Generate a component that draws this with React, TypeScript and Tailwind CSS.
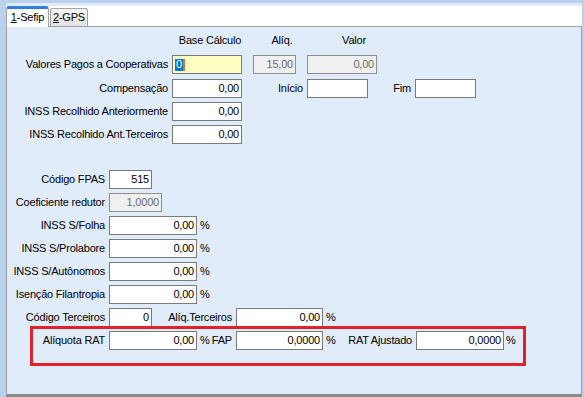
import React from "react"

type BoxProps = {
  w: string
  value?: React.ReactNode
  kind?: "normal" | "disabled" | "focus"
}

// caixa de edição estilo Delphi
function Box({ w, value, kind = "normal" }: BoxProps) {
  const look =
    kind === "disabled"
      ? "bg-[#f0f0f0] border-[#8f8f8f] text-[#6d6d6d] justify-end"
      : kind === "focus"
      ? "bg-[#ffffc4] border-[#7a7a7a] justify-start pl-[2px]"
      : "bg-white border-[#7a7a7a] justify-end"
  return (
    <div className={`h-[19px] ${w} shrink-0 border flex items-center pr-[2px] ${look}`}>
      {value}
    </div>
  )
}

function Label({ w, children }: { w: string; children: React.ReactNode }) {
  return <div className={`${w} shrink-0 text-right whitespace-nowrap`}>{children}</div>
}

function Pct() {
  return <span className="ml-[3px]">%</span>
}

export default function App() {
  return (
    <div className="w-[584px] h-[397px] bg-[#b9d1ec] flex flex-col pt-[3px] pl-[6px] pr-[2px] font-['Liberation_Sans',Arial,sans-serif] text-[11px] leading-none text-black tracking-[-0.2px]">
      <div className="h-[3px] bg-[#dfeaf7]" />
      {/* abas */}
      <div className="h-[20px] bg-white flex items-end">
        <div className="relative z-10 -mb-px h-[21px] w-[43px] bg-white border-x border-[#a3a3a3] border-t-[3px] border-t-[#2f80d8] rounded-t-[3px] flex items-center justify-center pb-[1px]">
          <span>
            <span className="underline">1</span>-Sefip
          </span>
        </div>
        <div className="ml-px h-[18px] w-[38px] bg-gradient-to-b from-[#f7f7f7] to-[#e2e2e2] border-x border-t border-[#a3a3a3] rounded-t-[3px] flex items-center justify-center">
          <span>
            <span className="underline">2</span>-GPS
          </span>
        </div>
      </div>

      <div className="flex-1 bg-[#e1ecfb] border border-[#a0a0a0] border-b-[3px] border-b-[#8c8c8c] flex flex-col">
        {/* cabeçalho */}
        <div className="mt-[6px] h-[14px] flex items-center">
          <div className="ml-[165px] w-[76px] text-center">Base Cálculo</div>
          <div className="ml-[14px] w-[40px] text-center">Alíq.</div>
          <div className="ml-[22px] w-[60px] text-center">Valor</div>
        </div>

        <div className="mt-[8px] flex items-center">
          <Label w="w-[161px]">Valores Pagos a Cooperativas</Label>
          <div className="ml-[4px]">
            <Box
              w="w-[70px]"
              kind="focus"
              value={<span className="bg-[#0078d7] text-white px-[1px] h-[12px] flex items-center border-r-2 border-r-[#e0701a]">0</span>}
            />
          </div>
          <div className="ml-[11px]">
            <Box w="w-[43px]" kind="disabled" value="15,00" />
          </div>
          <div className="ml-[11px]">
            <Box w="w-[70px]" kind="disabled" value="0,00" />
          </div>
        </div>

        <div className="mt-[5px] flex items-center">
          <Label w="w-[161px]">Compensação</Label>
          <div className="ml-[4px]">
            <Box w="w-[70px]" value="0,00" />
          </div>
          <Label w="w-[61px]">Início</Label>
          <div className="ml-[4px]">
            <Box w="w-[61px]" />
          </div>
          <Label w="w-[43px]">Fim</Label>
          <div className="ml-[4px]">
            <Box w="w-[61px]" />
          </div>
        </div>

        <div className="mt-[4px] flex items-center">
          <Label w="w-[161px]">INSS Recolhido Anteriormente</Label>
          <div className="ml-[4px]">
            <Box w="w-[70px]" value="0,00" />
          </div>
        </div>

        <div className="mt-[4px] flex items-center">
          <Label w="w-[161px]">INSS Recolhido Ant.Terceiros</Label>
          <div className="ml-[4px]">
            <Box w="w-[70px]" value="0,00" />
          </div>
        </div>

        {/* bloco inferior */}
        <div className="mt-[26px] flex items-center">
          <Label w="w-[98px]">Código FPAS</Label>
          <div className="ml-[4px]">
            <Box w="w-[43px]" value="515" />
          </div>
        </div>

        <div className="mt-[4px] flex items-center">
          <Label w="w-[98px]">Coeficiente redutor</Label>
          <div className="ml-[4px]">
            <Box w="w-[53px]" kind="disabled" value="1,0000" />
          </div>
        </div>

        {["INSS S/Folha", "INSS S/Prolabore", "INSS S/Autônomos", "Isenção Filantropia"].map((l) => (
          <div key={l} className="mt-[4px] flex items-center">
            <Label w="w-[98px]">{l}</Label>
            <div className="ml-[4px]">
              <Box w="w-[88px]" value="0,00" />
            </div>
            <Pct />
          </div>
        ))}

        <div className="mt-[4px] flex items-center">
          <Label w="w-[98px]">Código Terceiros</Label>
          <div className="ml-[4px]">
            <Box w="w-[43px]" value="0" />
          </div>
          <Label w="w-[80px]">Alíq.Terceiros</Label>
          <div className="ml-[4px]">
            <Box w="w-[87px]" value="0,00" />
          </div>
          <Pct />
        </div>

        {/* destaque vermelho */}
        <div className="-mt-px ml-[23px] w-[496px] h-[40px] border-[3px] border-[#e3212b] pt-[2px]">
          <div className="flex items-center">
            <Label w="w-[72px]">Alíquota RAT</Label>
            <div className="ml-[4px]">
              <Box w="w-[88px]" value="0,00" />
            </div>
            <div className="w-[35px] pl-[3px] flex justify-between">
              <span>%</span>
              <span>FAP</span>
            </div>
            <div className="ml-[4px]">
              <Box w="w-[87px]" value="0,0000" />
            </div>
            <div className="w-[89px] pl-[3px] flex justify-between">
              <span>%</span>
              <span>RAT Ajustado</span>
            </div>
            <div className="ml-[4px]">
              <Box w="w-[88px]" value="0,0000" />
            </div>
            <span className="ml-[2px]">%</span>
          </div>
        </div>
      </div>
    </div>
  )
}
